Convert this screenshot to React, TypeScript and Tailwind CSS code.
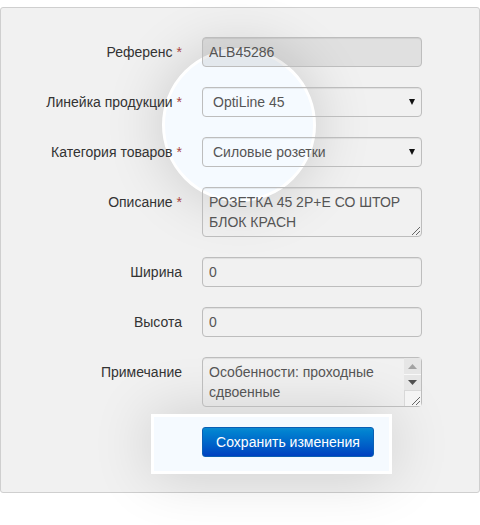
const labelClass = "w-[181px] shrink-0 text-right text-[14px] text-[#333] leading-[30px]";
const fieldClass =
  "block w-[220px] rounded-[4px] border border-[#bdbdbd] text-[14px] text-[#555] shadow-[inset_0_1px_1px_rgba(0,0,0,0.075)] outline-none";

function Label({ text, required }: { text: string; required?: boolean }) {
  return (
    <label className={labelClass}>
      {text}
      {required && <span className="ml-1 text-[#a94442]">*</span>}
    </label>
  );
}

function Row({ children, label, required }: { children: React.ReactNode; label: string; required?: boolean }) {
  return (
    <div className="flex gap-5">
      <Label text={label} required={required} />
      {children}
    </div>
  );
}

function SelectField({ value }: { value: string }) {
  return (
    <div className="relative h-[30px] w-[220px]">
      <select
        defaultValue={value}
        className={`${fieldClass} h-[30px] appearance-none bg-transparent pl-[10px] pr-6`}
      >
        <option>{value}</option>
      </select>
      <svg className="absolute right-[7px] top-[12px]" width="6" height="6" viewBox="0 0 6 6">
        <path d="M0 0h6L3 6z" fill="#111" />
      </svg>
    </div>
  );
}

function Grip() {
  return (
    <svg className="pointer-events-none absolute bottom-[1px] right-[1px]" width="10" height="10" viewBox="0 0 10 10">
      <path d="M1 9L9 1M5 9L9 5" stroke="#666" strokeWidth="1" fill="none" />
    </svg>
  );
}

export default function App() {
  return (
    <div className="h-[525px] w-[480px] overflow-hidden bg-white font-['Liberation_Sans',Arial,sans-serif]">
      <div className="h-[7px]" />
      <div className="relative h-[486px] w-[480px] rounded-[3px] border border-[#cfcfcf] bg-[#f1f1f1]">
        {/* spotlight behind the select fields */}
        <div className="absolute left-[161px] top-[40px] h-[154px] w-[154px] rounded-full border-[3px] border-white bg-[#f5faff] shadow-[0_0_60px_rgba(0,0,0,0.16)]" />
        {/* spotlight behind the button */}
        <div className="absolute left-[150px] top-[406px] h-[60px] w-[241px] border-[3px] border-white bg-[#f5faff] shadow-[0_0_60px_rgba(0,0,0,0.16)]" />

        <form className="relative flex flex-col gap-5 pt-[29px]">
          <Row label="Референс" required>
            <input
              disabled
              value="ALB45286"
              readOnly
              className={`${fieldClass} h-[30px] bg-[rgba(0,0,0,0.07)] px-[6px]`}
            />
          </Row>
          <Row label="Линейка продукции" required>
            <SelectField value="OptiLine 45" />
          </Row>
          <Row label="Категория товаров" required>
            <SelectField value="Силовые розетки" />
          </Row>
          <Row label="Описание" required>
            <div className="relative h-[50px] w-[220px]">
              <textarea
                readOnly
                value="РОЗЕТКА 45 2Р+Е СО ШТОР БЛОК КРАСН"
                className={`${fieldClass} h-[50px] resize-none overflow-hidden bg-transparent px-[6px] py-1 leading-5`}
              />
              <Grip />
            </div>
          </Row>
          <Row label="Ширина">
            <input readOnly value="0" className={`${fieldClass} h-[30px] bg-transparent px-[6px]`} />
          </Row>
          <Row label="Высота">
            <input readOnly value="0" className={`${fieldClass} h-[30px] bg-transparent px-[6px]`} />
          </Row>
          <Row label="Примечание">
            <div className="relative h-[50px] w-[220px]">
              <textarea
                readOnly
                value="Особенности: проходные сдвоенные"
                className={`${fieldClass} h-[50px] resize-none overflow-hidden bg-transparent py-1 pl-[6px] pr-5 leading-5`}
              />
              {/* scrollbar of the textarea */}
              <div className="absolute bottom-[1px] right-[1px] top-[1px] flex w-[17px] flex-col">
                <div className="flex h-4 items-center justify-center bg-[#e6e6e6]">
                  <svg width="9" height="5" viewBox="0 0 9 5"><path d="M4.5 0L9 5H0z" fill="#a3a3a3" /></svg>
                </div>
                <div className="flex h-4 items-center justify-center border-t border-[#f8f8f8] bg-[#e6e6e6]">
                  <svg width="9" height="5" viewBox="0 0 9 5"><path d="M0 0h9L4.5 5z" fill="#505050" /></svg>
                </div>
                <div className="flex-1 border-l border-t border-[#d8d8d8] bg-[#f4f4f4]" />
              </div>
              <Grip />
            </div>
          </Row>
          <div className="pl-[201px]">
            <button
              type="button"
              className="h-[30px] w-[172px] rounded-[3px] border border-[#0a5fb4] bg-gradient-to-b from-[#0a8ad2] to-[#0040c0] text-[14px] text-white"
            >
              Сохранить изменения
            </button>
          </div>
        </form>
      </div>
    </div>
  );
}
